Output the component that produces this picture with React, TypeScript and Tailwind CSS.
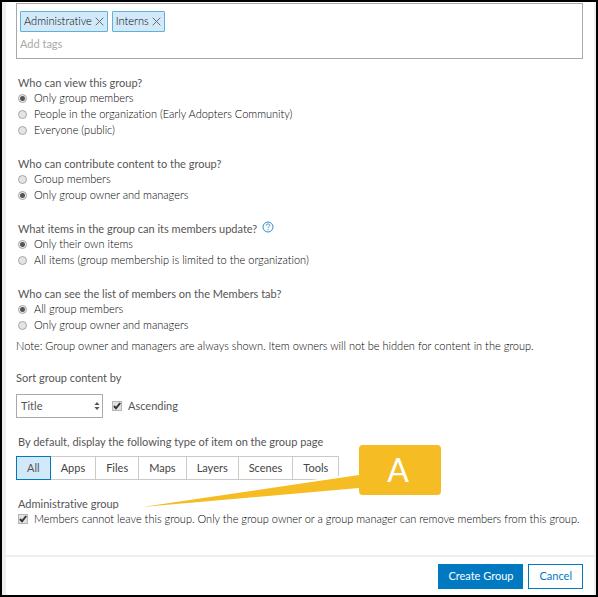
import React, { useState } from 'react';
import clsx from 'clsx';

const questions = [
  {
    name: 'view',
    title: 'Who can view this group?',
    options: ['Only group members', 'People in the organization (Early Adopters Community)', 'Everyone (public)'],
    selected: 0,
    help: false,
  },
  {
    name: 'contribute',
    title: 'Who can contribute content to the group?',
    options: ['Group members', 'Only group owner and managers'],
    selected: 1,
    help: false,
  },
  {
    name: 'update',
    title: 'What items in the group can its members update?',
    options: ['Only their own items', 'All items (group membership is limited to the organization)'],
    selected: 0,
    help: true,
  },
  {
    name: 'members',
    title: 'Who can see the list of members on the Members tab?',
    options: ['All group members', 'Only group owner and managers'],
    selected: 0,
    help: false,
  },
];

const itemTypes = ['All', 'Apps', 'Files', 'Maps', 'Layers', 'Scenes', 'Tools'];

const Tag: React.FC<{ label: string; onRemove: () => void }> = ({ label, onRemove }) => (
  <span className="flex h-[21px] items-center gap-[3px] rounded-[1px] border border-[#5fb0dc] bg-[#d2e9f9] px-[3px] text-[11px] font-light text-black">
    {label}
    <button type="button" aria-label={`Remove ${label}`} onClick={onRemove}>
      <svg viewBox="0 0 9 9" className="size-[9px]" fill="none" stroke="#5d6e79" strokeWidth="1">
        <path d="M.7.7l7.6 7.6M8.3.7L.7 8.3" />
      </svg>
    </button>
  </span>
);

const HelpIcon = () => (
  <svg viewBox="0 0 12 12" className="size-3" fill="none" stroke="#2f8fcb" strokeWidth="1">
    <circle cx="6" cy="6" r="5" />
    <path d="M4.3 4.7c0-1.1.7-1.7 1.7-1.7s1.7.6 1.7 1.5c0 1.2-1.6 1.3-1.6 2.5" />
    <path d="M6.1 8v1.1" />
  </svg>
);

const Checkbox: React.FC<{ id: string }> = ({ id }) => (
  <span className="relative flex size-[10px] shrink-0">
    <input
      id={id}
      type="checkbox"
      defaultChecked
      className="peer size-[10px] appearance-none border border-[#b4b4b4] bg-[#e2e2e2]"
    />
    <svg
      viewBox="0 0 10 10"
      className="pointer-events-none absolute inset-0 hidden size-[10px] peer-checked:block"
      fill="none"
      stroke="#333"
      strokeWidth="2"
    >
      <path d="M2 5l2 2.3L8.2 2" />
    </svg>
  </span>
);

const Callout = () => (
  <div className="pointer-events-none absolute -top-[51px] left-0 h-20 w-[425px]">
    {/* Pointer from the label down to the administrative setting */}
    <svg viewBox="0 0 425 80" className="absolute inset-0 h-20 w-[425px] overflow-visible">
      <path d="M126 62L343 30V43Z" fill="#fff" stroke="#fff" strokeWidth="4" strokeMiterlimit="100" />
      <path d="M126 62L343 30V43Z" fill="#f5bd23" />
    </svg>
    <div className="absolute right-0 top-0 flex h-[50px] w-[82px] items-center justify-center rounded-sm bg-[#f5bd23] pr-1 text-[32px] text-white">
      A
    </div>
  </div>
);

export default function App() {
  const [tags, setTags] = useState(['Administrative', 'Interns']);
  const [type, setType] = useState('All');

  return (
    <div className="min-h-screen border-2 border-black bg-white font-['Lato',sans-serif] text-[#555] [font-variant-ligatures:none]">
      <form className="border-l-4 border-r-2 border-[#efefef]" onSubmit={(e) => e.preventDefault()}>
        <div className="pl-[10px] pr-[11px] pt-px">
          {/* Tags */}
          <div className="h-14 border border-[#a9a9a9] px-[3px] pt-[7px]">
            <div className="flex gap-1">
              {tags.map((tag) => (
                <Tag key={tag} label={tag} onRemove={() => setTags(tags.filter((t) => t !== tag))} />
              ))}
            </div>
            <input
              type="text"
              aria-label="Add tags"
              placeholder="Add tags"
              className="mt-1 block h-4 w-full text-[11px] leading-4 outline-none placeholder:text-[#a9a9a9]"
            />
          </div>

          {/* Permissions */}
          <div className="flex flex-col gap-[18px] pl-[2px] pt-4">
            {questions.map((q) => (
              <fieldset key={q.name}>
                <legend className="flex h-[15px] items-center gap-[5px] text-[11px] leading-[15px]">
                  {q.title}
                  {q.help && (
                    <button type="button" aria-label="Help" className="pb-1">
                      <HelpIcon />
                    </button>
                  )}
                </legend>
                {q.options.map((option, i) => (
                  <label key={option} className="flex h-4 items-center gap-[7px] text-[11px] font-light leading-4 text-black">
                    <input
                      type="radio"
                      name={q.name}
                      defaultChecked={i === q.selected}
                      className="size-[9px] appearance-none rounded-full border border-[#a6a6a6] bg-[#e4e4e4] checked:bg-[radial-gradient(circle,#555_2px,#ececec_3px)]"
                    />
                    {option}
                  </label>
                ))}
              </fieldset>
            ))}
          </div>
          <p className="pt-[5px] text-[11px] font-light leading-4 text-black">
            Note: Group owner and managers are always shown. Item owners will not be hidden for content in the group.
          </p>

          {/* Sorting */}
          <label htmlFor="sort" className="mt-4 block text-[11px] leading-4">
            Sort group content by
          </label>
          <div className="mt-2 flex items-center gap-[9px]">
            <div className="relative">
              <select
                id="sort"
                className="block h-6 w-[87px] appearance-none border border-[#a9a9a9] bg-white pl-1 text-[11px] outline-none"
              >
                <option>Title</option>
              </select>
              <svg viewBox="0 0 6 8" className="pointer-events-none absolute right-[3px] top-2 h-2 w-[6px]" fill="#555">
                <path d="M3 0l2.6 3H.4zM3 8L.4 5h5.2z" />
              </svg>
            </div>
            <div className="flex items-center gap-[6px]">
              <Checkbox id="ascending" />
              <label htmlFor="ascending" className="text-[11px]">
                Ascending
              </label>
            </div>
          </div>

          {/* Default item type */}
          <h3 className="mt-4 pl-[2px] text-[11px] leading-4">
            By default, display the following type of item on the group page
          </h3>
          <div className="mt-[6px] flex">
            {itemTypes.map((t) => (
              <button
                key={t}
                type="button"
                onClick={() => setType(t)}
                className={clsx(
                  'h-6 border px-[10px] text-[11px] not-first:-ml-px',
                  t === type ? 'relative border-[#0079c1] bg-[#d2e9f9]' : 'border-[#cacaca] bg-white text-[#444]',
                )}
              >
                {t}
              </button>
            ))}
          </div>

          {/* Administrative group */}
          <div className="relative mt-4 pb-7 pl-[2px]">
            <h3 className="text-[11px] leading-[15px]">Administrative group</h3>
            <div className="flex min-h-4 items-center gap-[6px]">
              <Checkbox id="admin" />
              <label htmlFor="admin" className="text-[11px] font-light leading-4 text-black">
                Members cannot leave this group. Only the group owner or a group manager can remove members from this
                group.
              </label>
            </div>
            <Callout />
          </div>
        </div>

        {/* Footer */}
        <div className="flex justify-end gap-[5px] border-t-2 border-[#efefef] pb-[6px] pr-[11px] pt-[7px]">
          <button type="submit" className="h-[25px] border border-[#0079c1] bg-[#0079c1] px-[9px] text-[11px] text-white">
            Create Group
          </button>
          <button type="button" className="h-[25px] border border-[#0079c1] bg-white px-[10px] text-[11px] text-[#0079c1]">
            Cancel
          </button>
        </div>
      </form>
    </div>
  );
}
